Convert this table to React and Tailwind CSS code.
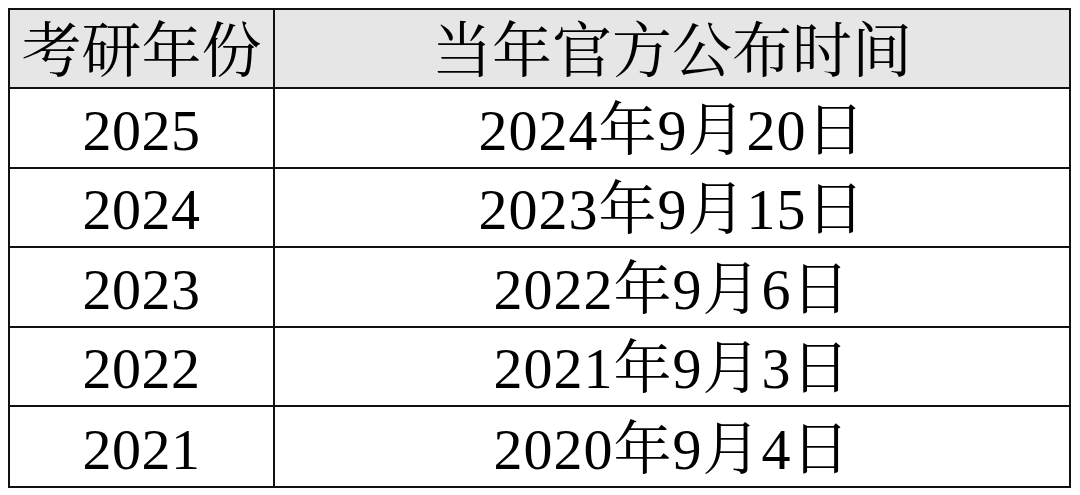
import React from 'react';

const rows = [
    ['2025', '2024年9月20日'],
    ['2024', '2023年9月15日'],
    ['2023', '2022年9月6日'],
    ['2022', '2021年9月3日'],
    ['2021', '2020年9月4日'],
];

const font = { fontFamily: '"Liberation Serif", "Noto Serif CJK SC", "Noto Sans CJK SC", serif' };

const App = () => {
    return (
        <div className="w-[1080px] h-[495px] bg-white pt-[8px] pl-[8px]" style={font}>
            <div className="w-[1063px] border-2 border-[#111] text-[58px] text-black leading-none">
                <div className="grid grid-cols-[265px_1fr] h-[79.4px] bg-[#e6e6e6] border-b-2 border-[#111] text-[60px]">
                    <div className="flex items-center justify-center border-r-2 border-[#111] pt-[6px]">考研年份</div>
                    <div className="flex items-center justify-center pt-[6px]">当年官方公布时间</div>
                </div>
                {rows.map(([year, date], i) => (
                    <div
                        key={year}
                        className={
                            'grid grid-cols-[265px_1fr] h-[79.4px] ' +
                            (i < rows.length - 1 ? 'border-b-2 border-[#111]' : '')
                        }
                    >
                        <div className="flex items-center justify-center border-r-2 border-[#111] pt-[6px] tracking-[0.5px]">{year}</div>
                        <div className="flex items-center justify-center pt-[6px] tracking-[1px]">{date}</div>
                    </div>
                ))}
            </div>
        </div>
    );
};

export default App;
